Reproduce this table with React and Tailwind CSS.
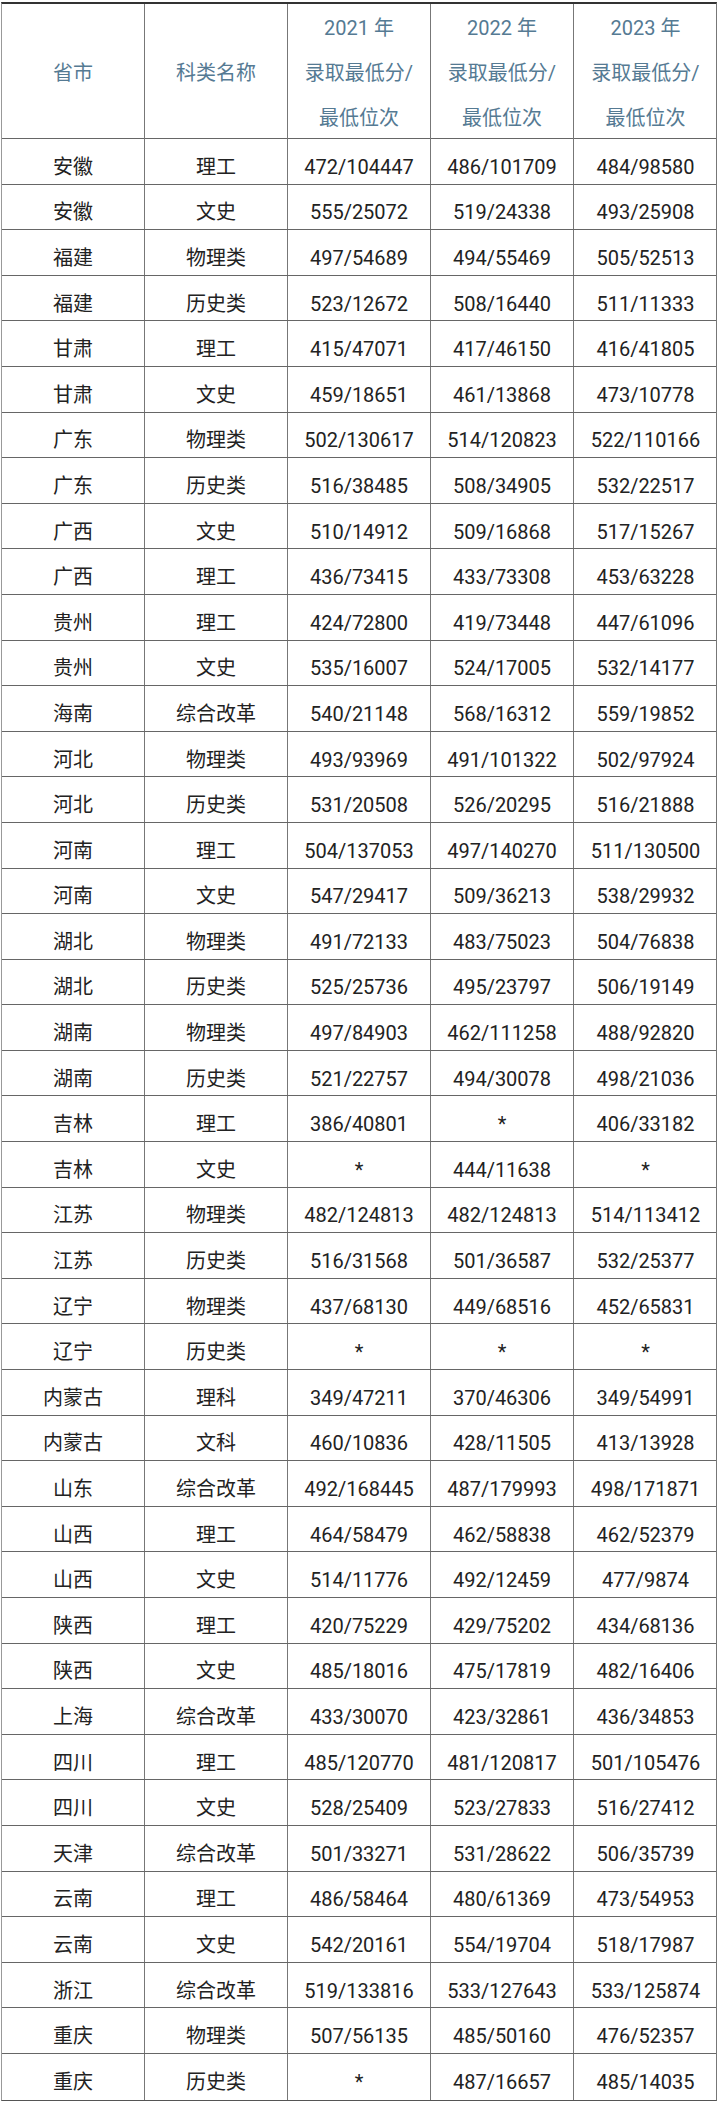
const rows = [
  ['安徽', '理工', '472/104447', '486/101709', '484/98580'],
  ['安徽', '文史', '555/25072', '519/24338', '493/25908'],
  ['福建', '物理类', '497/54689', '494/55469', '505/52513'],
  ['福建', '历史类', '523/12672', '508/16440', '511/11333'],
  ['甘肃', '理工', '415/47071', '417/46150', '416/41805'],
  ['甘肃', '文史', '459/18651', '461/13868', '473/10778'],
  ['广东', '物理类', '502/130617', '514/120823', '522/110166'],
  ['广东', '历史类', '516/38485', '508/34905', '532/22517'],
  ['广西', '文史', '510/14912', '509/16868', '517/15267'],
  ['广西', '理工', '436/73415', '433/73308', '453/63228'],
  ['贵州', '理工', '424/72800', '419/73448', '447/61096'],
  ['贵州', '文史', '535/16007', '524/17005', '532/14177'],
  ['海南', '综合改革', '540/21148', '568/16312', '559/19852'],
  ['河北', '物理类', '493/93969', '491/101322', '502/97924'],
  ['河北', '历史类', '531/20508', '526/20295', '516/21888'],
  ['河南', '理工', '504/137053', '497/140270', '511/130500'],
  ['河南', '文史', '547/29417', '509/36213', '538/29932'],
  ['湖北', '物理类', '491/72133', '483/75023', '504/76838'],
  ['湖北', '历史类', '525/25736', '495/23797', '506/19149'],
  ['湖南', '物理类', '497/84903', '462/111258', '488/92820'],
  ['湖南', '历史类', '521/22757', '494/30078', '498/21036'],
  ['吉林', '理工', '386/40801', '*', '406/33182'],
  ['吉林', '文史', '*', '444/11638', '*'],
  ['江苏', '物理类', '482/124813', '482/124813', '514/113412'],
  ['江苏', '历史类', '516/31568', '501/36587', '532/25377'],
  ['辽宁', '物理类', '437/68130', '449/68516', '452/65831'],
  ['辽宁', '历史类', '*', '*', '*'],
  ['内蒙古', '理科', '349/47211', '370/46306', '349/54991'],
  ['内蒙古', '文科', '460/10836', '428/11505', '413/13928'],
  ['山东', '综合改革', '492/168445', '487/179993', '498/171871'],
  ['山西', '理工', '464/58479', '462/58838', '462/52379'],
  ['山西', '文史', '514/11776', '492/12459', '477/9874'],
  ['陕西', '理工', '420/75229', '429/75202', '434/68136'],
  ['陕西', '文史', '485/18016', '475/17819', '482/16406'],
  ['上海', '综合改革', '433/30070', '423/32861', '436/34853'],
  ['四川', '理工', '485/120770', '481/120817', '501/105476'],
  ['四川', '文史', '528/25409', '523/27833', '516/27412'],
  ['天津', '综合改革', '501/33271', '531/28622', '506/35739'],
  ['云南', '理工', '486/58464', '480/61369', '473/54953'],
  ['云南', '文史', '542/20161', '554/19704', '518/17987'],
  ['浙江', '综合改革', '519/133816', '533/127643', '533/125874'],
  ['重庆', '物理类', '507/56135', '485/50160', '476/52357'],
  ['重庆', '历史类', '*', '487/16657', '485/14035'],
]

const years = ['2021', '2022', '2023']

export default function App() {
  return (
    <div
      className="w-[720px] bg-white pt-[2px] pl-px text-[20px]"
      style={{ fontFamily: 'Roboto, "Noto Sans CJK SC", sans-serif' }}
    >
      <div className="w-[716px] border-t-2 border-t-[#333] border-l border-l-[#999] border-r border-r-[#777] border-b border-b-[#555]">
        {/* header */}
        <div className="grid grid-cols-[143px_143px_143px_143px_143px] h-[135px] border-b border-[#666] text-[#557a93]">
          <div className="flex items-center justify-center border-r border-[#777]">省市</div>
          <div className="flex items-center justify-center border-r border-[#777]">科类名称</div>
          {years.map((y, i) => (
            <div
              key={y}
              className={
                'flex flex-col items-center justify-center leading-[45px] pt-[2px] ' +
                (i < 2 ? 'border-r border-[#777]' : '')
              }
            >
              <span>{y} 年</span>
              <span>录取最低分/</span>
              <span>最低位次</span>
            </div>
          ))}
        </div>

        {/* data rows */}
        {rows.map((r, idx) => (
          <div
            key={idx}
            className={
              'grid grid-cols-[143px_143px_143px_143px_143px] h-[45.6px] text-[#222] ' +
              (idx < rows.length - 1 ? 'border-b border-[#666]' : '')
            }
          >
            {r.map((c, j) => (
              <div
                key={j}
                className={
                  'flex items-center justify-center pt-[11px] leading-none ' +
                  (j < 4 ? 'border-r border-[#777]' : '')
                }
              >
                {c}
              </div>
            ))}
          </div>
        ))}
      </div>
    </div>
  )
}
